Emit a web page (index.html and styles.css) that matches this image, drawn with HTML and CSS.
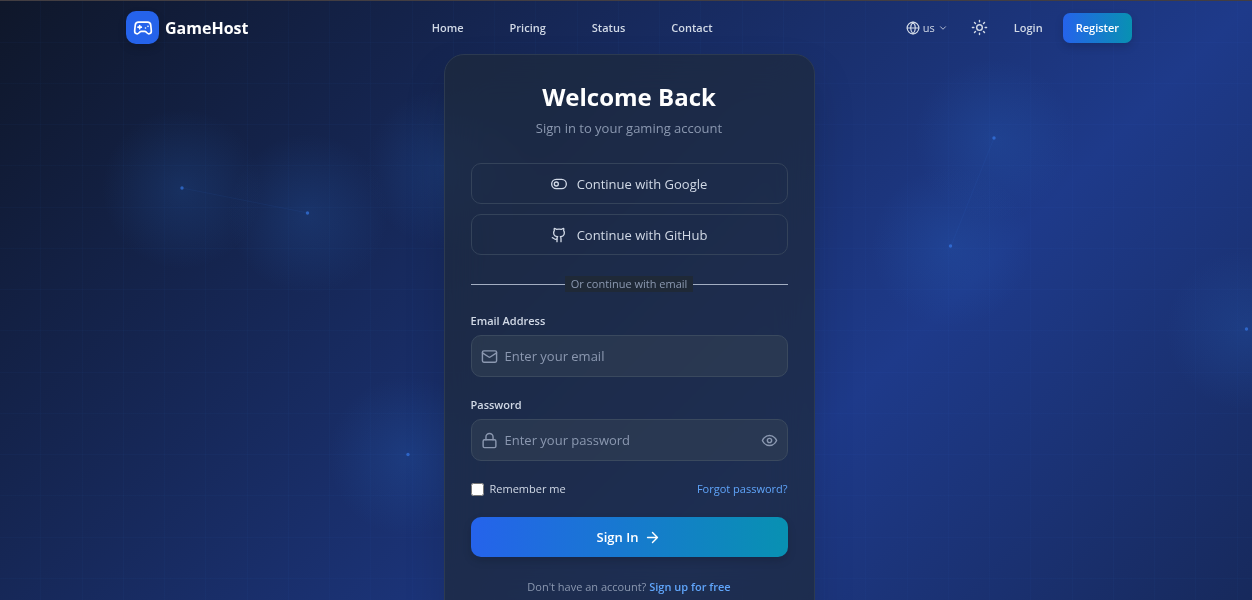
FILE: index.html
```
<!DOCTYPE html>
<html lang="en">
<head>
    <meta charset="UTF-8">
    <meta name="viewport" content="width=device-width, initial-scale=1.0">
    <title>GameHost - Login</title>
    <link rel="stylesheet" href="styles.css">
</head>
<body>
    <div class="backdrop" aria-hidden="true">
        <svg class="particles" viewBox="0 0 1252 600" preserveAspectRatio="xMidYMin slice">
            <defs>
                <radialGradient id="glow">
                    <stop offset="0" stop-color="#2b6fd0" stop-opacity="0.19"/>
                    <stop offset="0.5" stop-color="#2b6fd0" stop-opacity="0.1"/>
                    <stop offset="1" stop-color="#2b6fd0" stop-opacity="0"/>
                </radialGradient>
            </defs>
            <g fill="url(#glow)">
                <circle cx="182" cy="188" r="80"/>
                <circle cx="308" cy="213" r="80"/>
                <circle cx="446" cy="167" r="80"/>
                <circle cx="408" cy="455" r="80"/>
                <circle cx="994" cy="138" r="80"/>
                <circle cx="951" cy="246" r="80"/>
                <circle cx="1246" cy="329" r="80"/>
            </g>
            <g stroke="#3b82f6" stroke-opacity="0.07">
                <line x1="182" y1="187" x2="308" y2="212"/>
                <line x1="994" y1="137" x2="951" y2="245"/>
            </g>
            <g fill="#3b82f6" fill-opacity="0.6">
                <circle cx="182" cy="187" r="1.7"/>
                <circle cx="307.5" cy="212" r="1.7"/>
                <circle cx="408" cy="453.5" r="1.7"/>
                <circle cx="994" cy="137" r="1.7"/>
                <circle cx="950.5" cy="245" r="1.7"/>
                <circle cx="1246.5" cy="328" r="1.7"/>
            </g>
        </svg>
    </div>

    <header class="header">
        <a class="brand" href="#">
            <span class="brand-logo">
                <svg class="icon" width="20" height="20" viewBox="0 0 24 24">
                    <path d="M6 11h4M8 9v4M15 12h.01M18 10h.01"/>
                    <path d="M17.32 5H6.68a4 4 0 0 0-3.978 3.59c-.006.052-.01.101-.017.152C2.604 9.416 2 14.456 2 16a3 3 0 0 0 3 3c1 0 1.5-.5 2-1l1.414-1.414A2 2 0 0 1 9.828 16h4.344a2 2 0 0 1 1.414.586L17 18c.5.5 1 1 2 1a3 3 0 0 0 3-3c0-1.545-.604-6.584-.685-7.258-.007-.05-.011-.1-.017-.151A4 4 0 0 0 17.32 5z"/>
                </svg>
            </span>
            <span class="brand-name">GameHost</span>
        </a>
        <nav class="nav">
            <a href="#">Home</a>
            <a href="#">Pricing</a>
            <a href="#">Status</a>
            <a href="#">Contact</a>
        </nav>
        <div class="actions">
            <label class="language">
                <svg class="icon" width="14" height="14" viewBox="0 0 24 24">
                    <circle cx="12" cy="12" r="10"/>
                    <path d="M12 2a14.5 14.5 0 0 0 0 20 14.5 14.5 0 0 0 0-20M2 12h20"/>
                </svg>
                <select aria-label="Language">
                    <option>us</option>
                </select>
                <svg class="icon" width="10" height="10" viewBox="0 0 24 24">
                    <path d="m6 9 6 6 6-6"/>
                </svg>
            </label>
            <button class="theme-toggle" type="button" aria-label="Toggle theme">
                <svg class="icon" width="17" height="17" viewBox="0 0 24 24">
                    <circle cx="12" cy="12" r="4"/>
                    <path d="M12 2v2M12 20v2M4.93 4.93l1.41 1.41M17.66 17.66l1.41 1.41M2 12h2M20 12h2M6.34 17.66l-1.41 1.41M19.07 4.93l-1.41 1.41"/>
                </svg>
            </button>
            <a class="login-link" href="#">Login</a>
            <a class="register-link" href="#">Register</a>
        </div>
    </header>

    <main class="card">
        <h1>Welcome Back</h1>
        <p class="subtitle">Sign in to your gaming account</p>

        <div class="social">
            <button class="social-button" type="button">
                <svg class="icon" width="16" height="16" viewBox="0 0 24 24">
                    <rect x="1" y="5" width="22" height="14" rx="7"/>
                    <circle cx="8" cy="12" r="3"/>
                </svg>
                Continue with Google
            </button>
            <button class="social-button" type="button">
                <svg class="icon" width="16" height="16" viewBox="0 0 24 24">
                    <path d="M15 22v-4a4.8 4.8 0 0 0-1-3.5c3 0 6-2 6-5.5.08-1.25-.27-2.48-1-3.5.28-1.15.28-2.35 0-3.5 0 0-1 0-3 1.5-2.64-.5-5.36-.5-8 0C6 2 5 2 5 2c-.3 1.15-.3 2.35 0 3.5A5.403 5.403 0 0 0 4 9c0 3.5 3 5.5 6 5.5-.39.49-.68 1.05-.85 1.65-.17.6-.22 1.23-.15 1.85v4"/>
                    <path d="M9 18c-4.51 2-5-2-7-2"/>
                </svg>
                Continue with GitHub
            </button>
        </div>

        <div class="divider"><span>Or continue with email</span></div>

        <form>
            <div class="form-group">
                <label for="email">Email Address</label>
                <div class="field">
                    <svg class="icon" width="17" height="17" viewBox="0 0 24 24">
                        <rect x="2" y="4" width="20" height="16" rx="2"/>
                        <path d="m22 7-8.97 5.7a1.94 1.94 0 0 1-2.06 0L2 7"/>
                    </svg>
                    <input type="email" id="email" placeholder="Enter your email">
                </div>
            </div>
            <div class="form-group">
                <label for="password">Password</label>
                <div class="field">
                    <svg class="icon" width="17" height="17" viewBox="0 0 24 24">
                        <rect x="3" y="11" width="18" height="11" rx="2"/>
                        <path d="M7 11V7a5 5 0 0 1 10 0v4"/>
                    </svg>
                    <input type="password" id="password" placeholder="Enter your password">
                    <button class="reveal" type="button" aria-label="Show password">
                        <svg class="icon" width="17" height="17" viewBox="0 0 24 24">
                            <path d="M2 12s3-7 10-7 10 7 10 7-3 7-10 7-10-7-10-7Z"/>
                            <circle cx="12" cy="12" r="3"/>
                        </svg>
                    </button>
                </div>
            </div>
            <div class="options">
                <label class="remember" for="remember">
                    <input type="checkbox" id="remember">
                    Remember me
                </label>
                <a href="#">Forgot password?</a>
            </div>
            <button class="submit" type="submit">
                Sign In
                <svg class="icon" width="17" height="17" viewBox="0 0 24 24">
                    <path d="M5 12h14M12 5l7 7-7 7"/>
                </svg>
            </button>
        </form>

        <p class="signup">Don't have an account? <a href="#">Sign up for free</a></p>
    </main>
</body>
</html>
```
FILE: styles.css
```
* {
    box-sizing: border-box;
}
body {
    margin: 0;
    padding-left: 6px;
    border-top: 1px solid #433e42;
    font-family: 'Segoe UI', 'Open Sans', 'Noto Sans', sans-serif;
    font-size: 11px;
    line-height: 16px;
    color: #d1d9e6;
    background-color: #0f172a;
}
a {
    color: inherit;
    text-decoration: none;
}
button, input, select {
    font: inherit;
    color: inherit;
}
button {
    padding: 0;
    border: none;
    background: none;
    cursor: pointer;
}
.icon {
    display: block;
    flex: none;
    fill: none;
    stroke: currentColor;
    stroke-width: 2;
    stroke-linecap: round;
    stroke-linejoin: round;
}

/* background gradient, grid and particles */
.backdrop {
    position: fixed;
    inset: 1px 0 0;
    z-index: -1;
    overflow: hidden;
    background:
        linear-gradient(90deg, transparent 40px, #3b82f608 40px 41px, transparent 41px 82px, #3b82f608 82px 83px, transparent 83px 123px, #3b82f608 123px 124px, transparent 124px 164px, #3b82f608 164px) 0 0 / 165px 165px,
        linear-gradient(transparent 41px, #3b82f608 41px 42px, transparent 42px 82px, #3b82f608 82px 83px, transparent 83px 123px, #3b82f608 123px 124px, transparent 124px 164px, #3b82f608 164px) 0 0 / 165px 165px,
        linear-gradient(135deg, #0f172a, #1e3a8a 50%, #0f172a) 0 0 / 100% 100vw;
}
.particles {
    display: block;
    width: 100%;
    height: 100%;
}

.header {
    display: flex;
    align-items: center;
    justify-content: space-between;
    max-width: 1006px;
    height: 53px;
    margin: 0 auto;
    font-weight: 600;
}
.brand {
    display: flex;
    align-items: center;
    gap: 6px;
    color: white;
}
.brand-logo {
    display: grid;
    place-items: center;
    width: 33px;
    height: 33px;
    border-radius: 10px;
    background-color: #2563eb;
    box-shadow: 0 4px 8px rgba(0,0,0,0.15);
}
.brand-name {
    font-size: 16px;
    font-weight: bold;
}
.nav {
    display: flex;
    gap: 46px;
    padding-right: 10px;
}
.actions {
    display: flex;
    align-items: center;
}
.language {
    display: flex;
    align-items: center;
    gap: 3px;
    font-weight: normal;
}
.language select {
    padding: 0;
    border: none;
    background: none;
    appearance: none;
}
.theme-toggle {
    margin: 0 26px 0 23px;
}
.register-link {
    margin-left: 20px;
    padding: 7px 13px;
    border-radius: 7px;
    color: white;
    background: linear-gradient(90deg, #2563eb, #0891b2);
    box-shadow: 0 4px 8px rgba(0,0,0,0.15);
}

.card {
    max-width: 371px;
    margin: 0 auto 26px;
    padding: 26px;
    border: 1px solid #2c3a50;
    border-radius: 20px;
    background-color: rgba(30,41,58,0.7);
    backdrop-filter: blur(20px);
    box-shadow: 0 20px 40px rgba(0,0,0,0.15);
}
h1 {
    margin: 0 0 6px;
    font-size: 24px;
    line-height: 32px;
    text-align: center;
    color: white;
}
.subtitle {
    margin: 0 0 26px;
    font-size: 13px;
    line-height: 18px;
    text-align: center;
    color: #8b98b0;
}
.social {
    display: grid;
    gap: 10px;
}
.social-button {
    display: flex;
    align-items: center;
    justify-content: center;
    gap: 10px;
    height: 41px;
    border: 1px solid #34435a;
    border-radius: 10px;
    font-size: 13px;
}
.divider {
    display: flex;
    align-items: center;
    margin: 21px 0;
    color: #8b98b0;
}
.divider::before, .divider::after {
    content: "";
    flex: 1;
    height: 1px;
    background-color: #a3aec2;
}
.divider span {
    padding: 0 6px;
    background-color: #1f2937;
}
.form-group {
    margin-bottom: 20px;
}
.form-group label {
    display: block;
    margin-bottom: 6px;
    font-weight: 600;
}
.field {
    display: flex;
    align-items: center;
    gap: 7px;
    height: 42px;
    padding: 0 9px;
    border: 1px solid #3a495e;
    border-radius: 10px;
    color: #8b98b0;
    background-color: rgba(53,68,86,0.5);
}
.field input {
    flex: 1;
    min-width: 0;
    padding: 0;
    border: none;
    outline: none;
    font-size: 13px;
    color: white;
    background: none;
}
.field input::placeholder {
    color: #8b98b0;
}
.options {
    display: flex;
    justify-content: space-between;
}
.remember {
    display: flex;
    align-items: center;
    gap: 6px;
}
.remember input {
    width: 13px;
    height: 13px;
    margin: 0;
}
.options a, .signup a {
    color: #60a5fa;
}
.submit {
    display: flex;
    align-items: center;
    justify-content: center;
    gap: 6px;
    width: 100%;
    height: 40px;
    margin-top: 20px;
    border-radius: 10px;
    font-size: 13px;
    font-weight: 600;
    color: white;
    background: linear-gradient(90deg, #2563eb, #0891b2);
    box-shadow: 0 4px 8px rgba(0,0,0,0.15);
}
.signup {
    margin: 22px 0 0;
    text-align: center;
    color: #8b98b0;
}
.signup a {
    font-weight: 600;
}
```
